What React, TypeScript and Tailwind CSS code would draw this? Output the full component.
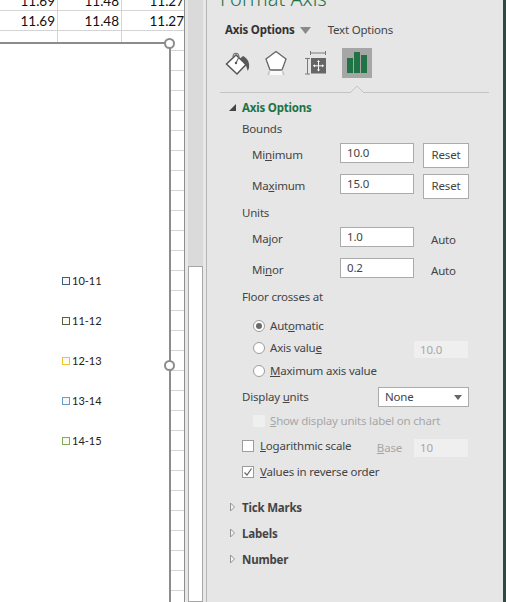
import React from 'react';

const FONT = "font-['Noto_Sans',sans-serif]";

const cellClass = 'flex items-center justify-end pt-[1px] border-r border-[#d4d4d4] text-[13.5px] leading-[20px] text-[#111]';

const SheetRow: React.FC<{ values: string[]; height: string }> = ({ values, height }) => (
  <div className={`flex shrink-0 border-b border-[#d4d4d4] overflow-hidden items-end ${height}`}>
    <div className={`${cellClass} w-[58px] h-[20px] shrink-0 pr-[2px]`}>{values[0]}</div>
    <div className={`${cellClass} w-[64px] h-[20px] shrink-0 pr-[2px]`}>{values[1]}</div>
    <div className={`${cellClass} flex-1 h-[20px] !border-r-0`}>{values[2]}</div>
  </div>
);

const legend = [
  { label: '10-11', color: 'border-[#3d5f7a]', fill: 'bg-[#f4f8fb]' },
  { label: '11-12', color: 'border-[#59613f]', fill: 'bg-[#fafaf5]' },
  { label: '12-13', color: 'border-[#f2c230]', fill: 'bg-[#fffdf2]' },
  { label: '13-14', color: 'border-[#6f9cc4]', fill: 'bg-[#f3f8fd]' },
  { label: '14-15', color: 'border-[#86a95f]', fill: 'bg-[#f6faf1]' },
];

const Handle: React.FC<{ className: string }> = ({ className }) => (
  <div className={`absolute w-[11px] h-[11px] rounded-full bg-white border-2 border-[#8c8c8c] ${className}`} />
);

const Sheet: React.FC = () => (
  <div className="w-[185px] shrink-0 bg-white border-r border-[#8f8f8f] flex flex-col font-['Lato',sans-serif]">
    <SheetRow values={['11.69', '11.48', '11.27']} height="h-[11px]" />
    <SheetRow values={['11.69', '11.48', '11.27']} height="h-[20px]" />
    <div className="h-[11px] shrink-0 flex">
      <div className="w-[58px] border-r border-[#d4d4d4]" />
      <div className="w-[64px] border-r border-[#d4d4d4]" />
    </div>
    <div className="flex flex-1 min-h-0 relative">
      <div className="w-[171px] shrink-0 border-t-2 border-r-2 border-[#8c8c8c] pt-[217px] pl-[62px]">
        {legend.map((item) => (
          <div key={item.label} className="h-[40px] flex items-center gap-[2px] text-[11px] text-[#222]">
            <span className={`w-[8px] h-[8px] border ${item.color} ${item.fill}`} />
            <span>{item.label}</span>
          </div>
        ))}
      </div>
      <div className="flex-1 overflow-hidden">
        <div className="h-[9px] border-b border-[#d4d4d4]" />
        {Array.from({ length: 28 }).map((_, i) => (
          <div key={i} className="h-[20px] border-b border-[#d4d4d4]" />
        ))}
      </div>
      <Handle className="left-[164px] top-[-4px]" />
      <Handle className="left-[164px] top-[318px]" />
    </div>
  </div>
);

const Scrollbar: React.FC = () => (
  <div className="w-[21px] shrink-0 bg-[#e8e8e8] pl-[3px] pr-[3px] flex flex-col">
    <div className="h-[266px] bg-[#dadada]" />
    <div className="flex-1 bg-white border border-[#a6a6a6]" />
  </div>
);

const Input: React.FC<{ value: string }> = ({ value }) => (
  <div className="w-[74px] h-[20px] bg-white border border-[#ababab] pl-[6px] flex items-center text-[#444] shrink-0">
    {value}
  </div>
);

const DisabledInput: React.FC<{ value: string; className: string }> = ({ value, className }) => (
  <div className={`w-[54px] bg-[#efefef] pl-[6px] flex items-center text-[#a6a6a6] ${className}`}>
    {value}
  </div>
);

const ResetButton: React.FC = () => (
  <div className="w-[46px] h-[25px] ml-[9px] pb-[2px] bg-white border border-[#ababab] flex items-center justify-center text-[#444]">
    Reset
  </div>
);

const FieldRow: React.FC<{ label: React.ReactNode; value: string; reset?: boolean; className: string }> = ({
  label,
  value,
  reset,
  className,
}) => (
  <div className={`flex h-[25px] items-start ${className}`}>
    <div className="w-[98px] pl-[10px] h-[23px] flex items-center">{label}</div>
    <Input value={value} />
    {reset ? <ResetButton /> : <div className="ml-[17px] h-[25px] flex items-center">Auto</div>}
  </div>
);

const Radio: React.FC<{ checked?: boolean }> = ({ checked }) => (
  <span className="w-[12px] h-[12px] rounded-full bg-white border border-[#9c9c9c] flex items-center justify-center shrink-0">
    {checked && <span className="w-[6px] h-[6px] rounded-full bg-[#6a6a6a]" />}
  </span>
);

const Check: React.FC<{ checked?: boolean; disabled?: boolean }> = ({ checked, disabled }) => (
  <span className={`w-[12px] h-[12px] shrink-0 flex items-center justify-center ${disabled ? 'bg-[#efefef]' : 'bg-white border border-[#9c9c9c]'}`}>
    {checked && (
      <svg width="10" height="10" viewBox="0 0 10 10" fill="none">
        <path d="M1.5 5.5 L4 8 L8.5 1.5" stroke="#666" strokeWidth="1.2" />
      </svg>
    )}
  </span>
);

const CollapsedSection: React.FC<{ title: string; className: string }> = ({ title, className }) => (
  <div className={`h-[18px] flex items-center font-bold text-[#444] ${className}`}>
    <svg width="13" height="10" viewBox="0 0 13 10" className="ml-[8px] mr-[1px] mb-[2px]">
      <path d="M2.5 1 L6.5 5 L2.5 9 Z" fill="#f4f4f4" stroke="#8a8a8a" strokeWidth="0.9" />
    </svg>
    <span>{title}</span>
  </div>
);

const PaintIcon: React.FC = () => (
  <svg width="26" height="28" viewBox="0 0 26 28">
    <path d="M1.5 15 L11 6 L21 15.5 L12 25 Z" fill="#fff" stroke="#555" strokeWidth="1.5" />
    <path d="M8 8 C8 3 13.5 3 14 8 L11 14" fill="none" stroke="#666" strokeWidth="1.1" />
    <circle cx="11" cy="14" r="1.2" fill="#555" />
    <path d="M18 7 C22 9 25 13 24 19 L22.8 22 C22 20 21.5 17 20 15.5 L15 9.5 Z" fill="#595959" />
  </svg>
);

const PentagonIcon: React.FC = () => (
  <svg width="24" height="28" viewBox="0 0 24 28">
    <path d="M12 2.5 L22 10 L18 21 L6 21 L2 10 Z" fill="#fff" stroke="#666" strokeWidth="1.3" />
    <path d="M6 21 L4 26 M18 21 L20 26" stroke="#c4c4c4" strokeWidth="1.5" />
    <rect x="6" y="22" width="12" height="4" fill="#fafafa" />
  </svg>
);

const SizeIcon: React.FC = () => (
  <svg width="24" height="28" viewBox="0 0 24 28">
    <path d="M6.5 2 V6 M21.5 2 V6 M6.5 4 H21.5" stroke="#7a7a7a" strokeWidth="1" fill="none" />
    <path d="M1 9.5 H6 M1 25 H6 M3.5 9.5 V25" stroke="#7a7a7a" strokeWidth="1" fill="none" />
    <rect x="7" y="9" width="15" height="15.5" fill="#666" />
    <path d="M14.5 11.5 V22 M9.5 16.8 H19.5" stroke="#fff" strokeWidth="1" />
    <path d="M13 13 L14.5 11.2 L16 13 Z M13 20.5 L14.5 22.5 L16 20.5 Z M11 15.3 L9 16.8 L11 18.3 Z M18 15.3 L20 16.8 L18 18.3 Z" fill="#fff" />
  </svg>
);

const BarsIcon: React.FC = () => (
  <div className="w-[30px] h-[30px] bg-[#a6a6a6] flex items-center justify-center">
    <svg width="26" height="24" viewBox="0 0 26 24">
      <rect x="3" y="7" width="6" height="15" fill="#217346" />
      <rect x="10" y="1" width="6" height="21" fill="#217346" />
      <rect x="17" y="4" width="6" height="18" fill="#217346" />
    </svg>
  </div>
);

const Panel: React.FC = () => (
  <div className={`flex-1 bg-[#e6e6e6] border-l border-[#b5b5b5] text-[11.5px] tracking-[-0.2px] leading-[18px] text-[#444] ${FONT}`}>
    <div className="h-[20px] overflow-hidden pl-[13px]">
      <div className="-mt-[8px] text-[20px] leading-[14px] tracking-normal text-[#217346] font-light">Format Axis</div>
    </div>
    <div className="h-[20px] flex items-center pl-[18px]">
      <span className="font-bold text-[#333]">Axis Options</span>
      <svg width="11" height="7" viewBox="0 0 11 7" className="ml-[5px]">
        <path d="M0 0 H11 L5.5 7 Z" fill="#8a8a8a" />
      </svg>
      <span className="ml-[17px]">Text Options</span>
    </div>
    <div className="h-[30px] mt-[8px] flex items-center pl-[18px]">
      <PaintIcon />
      <div className="ml-[13px]"><PentagonIcon /></div>
      <div className="ml-[16px]"><SizeIcon /></div>
      <div className="ml-[14px]"><BarsIcon /></div>
    </div>
    <div className="relative h-px mt-[14px] ml-[13px] w-[269px] bg-[#c4c4c4]">
      <svg width="16" height="8" viewBox="0 0 16 8" className="absolute left-[129px] top-[-7px]">
        <path d="M0 8 H1 L8 1 L15 8 H16" fill="#e6e6e6" stroke="#c4c4c4" strokeWidth="1" />
      </svg>
    </div>
    <div className="h-[18px] mt-[6px] flex items-center font-bold text-[#217346]">
      <svg width="7" height="7" viewBox="0 0 7 7" className="ml-[22px] mr-[6px] mb-[2px]">
        <path d="M0 7 H7 V0 Z" fill="#444" />
      </svg>
      <span>Axis Options</span>
    </div>
    <div className="h-[18px] leading-[16px] mt-[4px] pl-[35px]">Bounds</div>
    <div className="pl-[35px]">
      <FieldRow className="mt-[4px]" label={<span>Mi<u>n</u>imum</span>} value="10.0" reset />
      <FieldRow className="mt-[6px]" label={<span>Ma<u>x</u>imum</span>} value="15.0" reset />
      <div className="h-[18px] leading-[16px] mt-[6px]">Units</div>
      <FieldRow className="mt-[4px]" label="Major" value="1.0" />
      <FieldRow className="mt-[6px]" label={<span>Mi<u>n</u>or</span>} value="0.2" />
      <div className="h-[18px] leading-[16px] mt-[6px]">Floor crosses at</div>

      <div className="h-[20px] mt-[9px] ml-[11px] flex items-center gap-[5px]">
        <Radio checked />
        <span>Aut<u>o</u>matic</span>
      </div>
      <div className="h-[20px] mt-[2px] ml-[11px] flex items-center gap-[5px]">
        <Radio />
        <span>Axis valu<u>e</u></span>
        <DisabledInput value="10.0" className="h-[17px] mt-[3px] ml-auto mr-[35px]" />
      </div>
      <div className="h-[20px] mt-[3px] ml-[11px] flex items-center gap-[5px]">
        <Radio />
        <span><u>M</u>aximum axis value</span>
      </div>
      <div className="h-[20px] mt-[6px] flex items-center">
        <span>Display <u>u</u>nits</span>
        <div className="ml-auto mr-[34px] w-[91px] h-[20px] bg-white border border-[#ababab] pl-[6px] flex items-center justify-between pr-[6px]">
          <span>None</span>
          <svg width="8" height="5" viewBox="0 0 8 5">
            <path d="M0 0 H8 L4 5 Z" fill="#666" />
          </svg>
        </div>
      </div>
      <div className="h-[20px] mt-[4px] ml-[11px] flex items-center gap-[5px] text-[#a6a6a6]">
        <Check disabled />
        <span><u>S</u>how display units label on chart</span>
      </div>
      <div className="h-[20px] mt-[5px] flex items-center gap-[6px]">
        <Check />
        <span><u>L</u>ogarithmic scale</span>
        <span className="ml-auto mt-[4px] text-[#a6a6a6]"><u>B</u>ase</span>
        <DisabledInput value="10" className="h-[18px] mt-[4px] ml-[6px] mr-[35px]" />
      </div>
      <div className="h-[20px] mt-[6px] flex items-center gap-[6px]">
        <Check checked />
        <span><u>V</u>alues in reverse order</span>
      </div>
    </div>
    <div className="pl-[13px]">
      <CollapsedSection title="Tick Marks" className="mt-[17px]" />
      <CollapsedSection title="Labels" className="mt-[8px]" />
      <CollapsedSection title="Number" className="mt-[8px]" />
    </div>
  </div>
);

export default function App() {
  return (
    <div className="w-[506px] h-[602px] flex overflow-hidden bg-white">
      <Sheet />
      <Scrollbar />
      <Panel />
      <div className="w-[3px] shrink-0 bg-[#2c4a41]" />
    </div>
  );
}
